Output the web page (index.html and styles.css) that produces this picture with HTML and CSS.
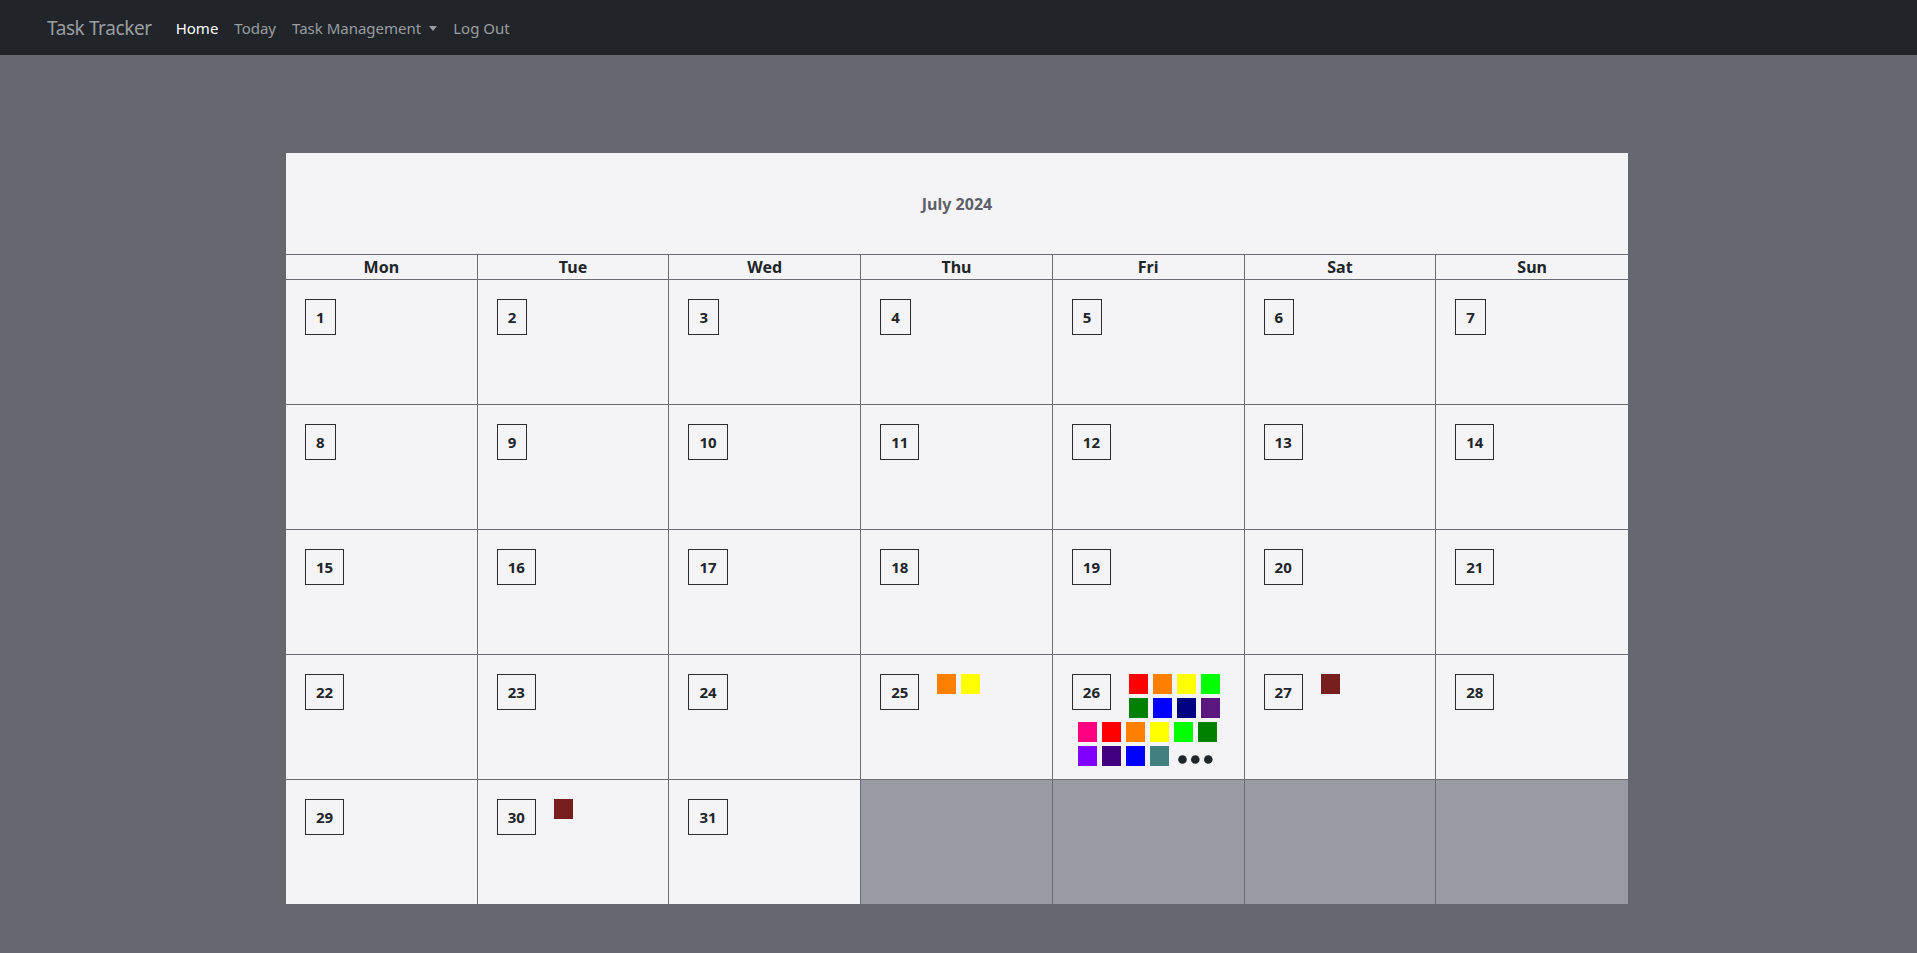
FILE: index.html
```html
<!DOCTYPE html>
<html lang="en">
<head>
<meta charset="utf-8">
<title>Task Tracker</title>
<link rel="stylesheet" href="styles.css">
</head>
<body>
<nav class="navbar">
  <a class="brand" href="#">Task Tracker</a>
  <ul class="nav">
    <li><a class="nav-link active" href="#">Home</a></li>
    <li><a class="nav-link" href="#">Today</a></li>
    <li><a class="nav-link dropdown" href="#">Task Management</a></li>
    <li><a class="nav-link" href="#">Log Out</a></li>
  </ul>
</nav>
<main class="page">
  <section class="calendar">
    <div class="cal-title">July 2024</div>
    <div class="grid">
      <div class="dow">Mon</div>
      <div class="dow">Tue</div>
      <div class="dow">Wed</div>
      <div class="dow">Thu</div>
      <div class="dow">Fri</div>
      <div class="dow">Sat</div>
      <div class="dow last">Sun</div>

      <div class="day"><span class="num">1</span></div>
      <div class="day"><span class="num">2</span></div>
      <div class="day"><span class="num">3</span></div>
      <div class="day"><span class="num">4</span></div>
      <div class="day"><span class="num">5</span></div>
      <div class="day"><span class="num">6</span></div>
      <div class="day last"><span class="num">7</span></div>

      <div class="day"><span class="num">8</span></div>
      <div class="day"><span class="num">9</span></div>
      <div class="day"><span class="num">10</span></div>
      <div class="day"><span class="num">11</span></div>
      <div class="day"><span class="num">12</span></div>
      <div class="day"><span class="num">13</span></div>
      <div class="day last"><span class="num">14</span></div>

      <div class="day"><span class="num">15</span></div>
      <div class="day"><span class="num">16</span></div>
      <div class="day"><span class="num">17</span></div>
      <div class="day"><span class="num">18</span></div>
      <div class="day"><span class="num">19</span></div>
      <div class="day"><span class="num">20</span></div>
      <div class="day last"><span class="num">21</span></div>

      <div class="day"><span class="num">22</span></div>
      <div class="day"><span class="num">23</span></div>
      <div class="day"><span class="num">24</span></div>
      <div class="day"><span class="num">25</span><div class="tasks"><span class="sq orange"></span><span class="sq yellow"></span></div></div>
      <div class="day"><span class="num">26</span><div class="tasks"><span class="sq red"></span><span class="sq orange"></span><span class="sq yellow"></span><span class="sq lime"></span><span class="sq green"></span><span class="sq blue"></span><span class="sq navy"></span><span class="sq purple"></span><span class="sq pink"></span><span class="sq red"></span><span class="sq orange"></span><span class="sq yellow"></span><span class="sq lime"></span><span class="sq green"></span><span class="sq violet"></span><span class="sq indigo"></span><span class="sq blue"></span><span class="sq teal"></span><span class="more"><svg width="35" height="20" viewBox="0 0 35 20"><circle cx="4.5" cy="13.5" r="4.3"/><circle cx="17.3" cy="13.5" r="4.3"/><circle cx="30.3" cy="13.5" r="4.3"/></svg></span></div></div>
      <div class="day"><span class="num">27</span><div class="tasks"><span class="sq maroon"></span></div></div>
      <div class="day last"><span class="num">28</span></div>

      <div class="day bottom"><span class="num">29</span></div>
      <div class="day bottom"><span class="num">30</span><div class="tasks"><span class="sq maroon"></span></div></div>
      <div class="day bottom"><span class="num">31</span></div>
      <div class="day bottom empty"></div>
      <div class="day bottom empty"></div>
      <div class="day bottom empty"></div>
      <div class="day bottom empty last"></div>
    </div>
  </section>
</main>
</body>
</html>
```

FILE: styles.css
```css
* { box-sizing: border-box; }

html, body {
  margin: 0;
  min-height: 100%;
}

body {
  background: #676770;
  font-family: "Noto Sans", "Open Sans", sans-serif;
  color: #212529;
}

.navbar {
  height: 55px;
  background: #212529;
  display: flex;
  align-items: center;
  padding-left: 47px;
}

.brand {
  font-size: 19px;
  color: #9a9da1;
  text-decoration: none;
  margin-right: 16px;
  letter-spacing: -0.4px;
}

.nav {
  display: flex;
  list-style: none;
  margin: 0;
  padding: 0;
}

.nav-link {
  display: block;
  padding: 8px;
  font-size: 15px;
  color: #9a9da1;
  text-decoration: none;
}

.nav-link.active { color: #ffffff; }

.dropdown::after {
  content: "";
  display: inline-block;
  margin-left: 8px;
  vertical-align: 3px;
  border-top: 5px solid #9a9da1;
  border-left: 4px solid transparent;
  border-right: 4px solid transparent;
}

.page {
  padding-top: 98px;
  padding-right: 3px;
  padding-bottom: 50px;
}

.calendar {
  width: 1342px;
  margin: 0 auto;
  background: #f4f4f6;
}

.cal-title {
  height: 102px;
  display: flex;
  align-items: center;
  justify-content: center;
  font-size: 16px;
  font-weight: 700;
  color: #5f5f69;
  border-bottom: 1px solid #6c6c75;
}

.grid {
  display: grid;
  grid-template-columns: repeat(7, 1fr);
}

.dow {
  height: 25px;
  line-height: 24px;
  text-align: center;
  font-size: 16px;
  font-weight: 700;
  border-right: 1px solid #6c6c75;
  border-bottom: 1px solid #6c6c75;
}

.day {
  height: 125px;
  padding: 19px 0 0 19px;
  border-right: 1px solid #6c6c75;
  border-bottom: 1px solid #6c6c75;
}

.dow.last, .day.last { border-right: none; }
.day.bottom { border-bottom: none; height: 124px; }
.day.empty { background: #9a9aa3; }

.num {
  float: left;
  border: 1px solid #2d2d2d;
  padding: 5px 10px;
  font-size: 15px;
  font-weight: 700;
  line-height: 24px;
  margin-right: 18px;
}

.tasks {
  font-size: 0;
  line-height: 0;
  padding-left: 6px;
}

.sq {
  display: inline-block;
  width: 19px;
  height: 20px;
  margin: 0 5px 4px 0;
  vertical-align: top;
}

.more {
  display: inline-block;
  width: 35px;
  height: 20px;
  margin-left: 4px;
  vertical-align: top;
}

.more svg { display: block; fill: #212529; }

.red { background: #ff0000; }
.orange { background: #ff8000; }
.yellow { background: #ffff00; }
.lime { background: #00ff00; }
.green { background: #008000; }
.blue { background: #0000ff; }
.navy { background: #000080; }
.purple { background: #5c167f; }
.pink { background: #ff0080; }
.violet { background: #8000ff; }
.indigo { background: #400080; }
.teal { background: #418080; }
.maroon { background: #771e1e; }
```
